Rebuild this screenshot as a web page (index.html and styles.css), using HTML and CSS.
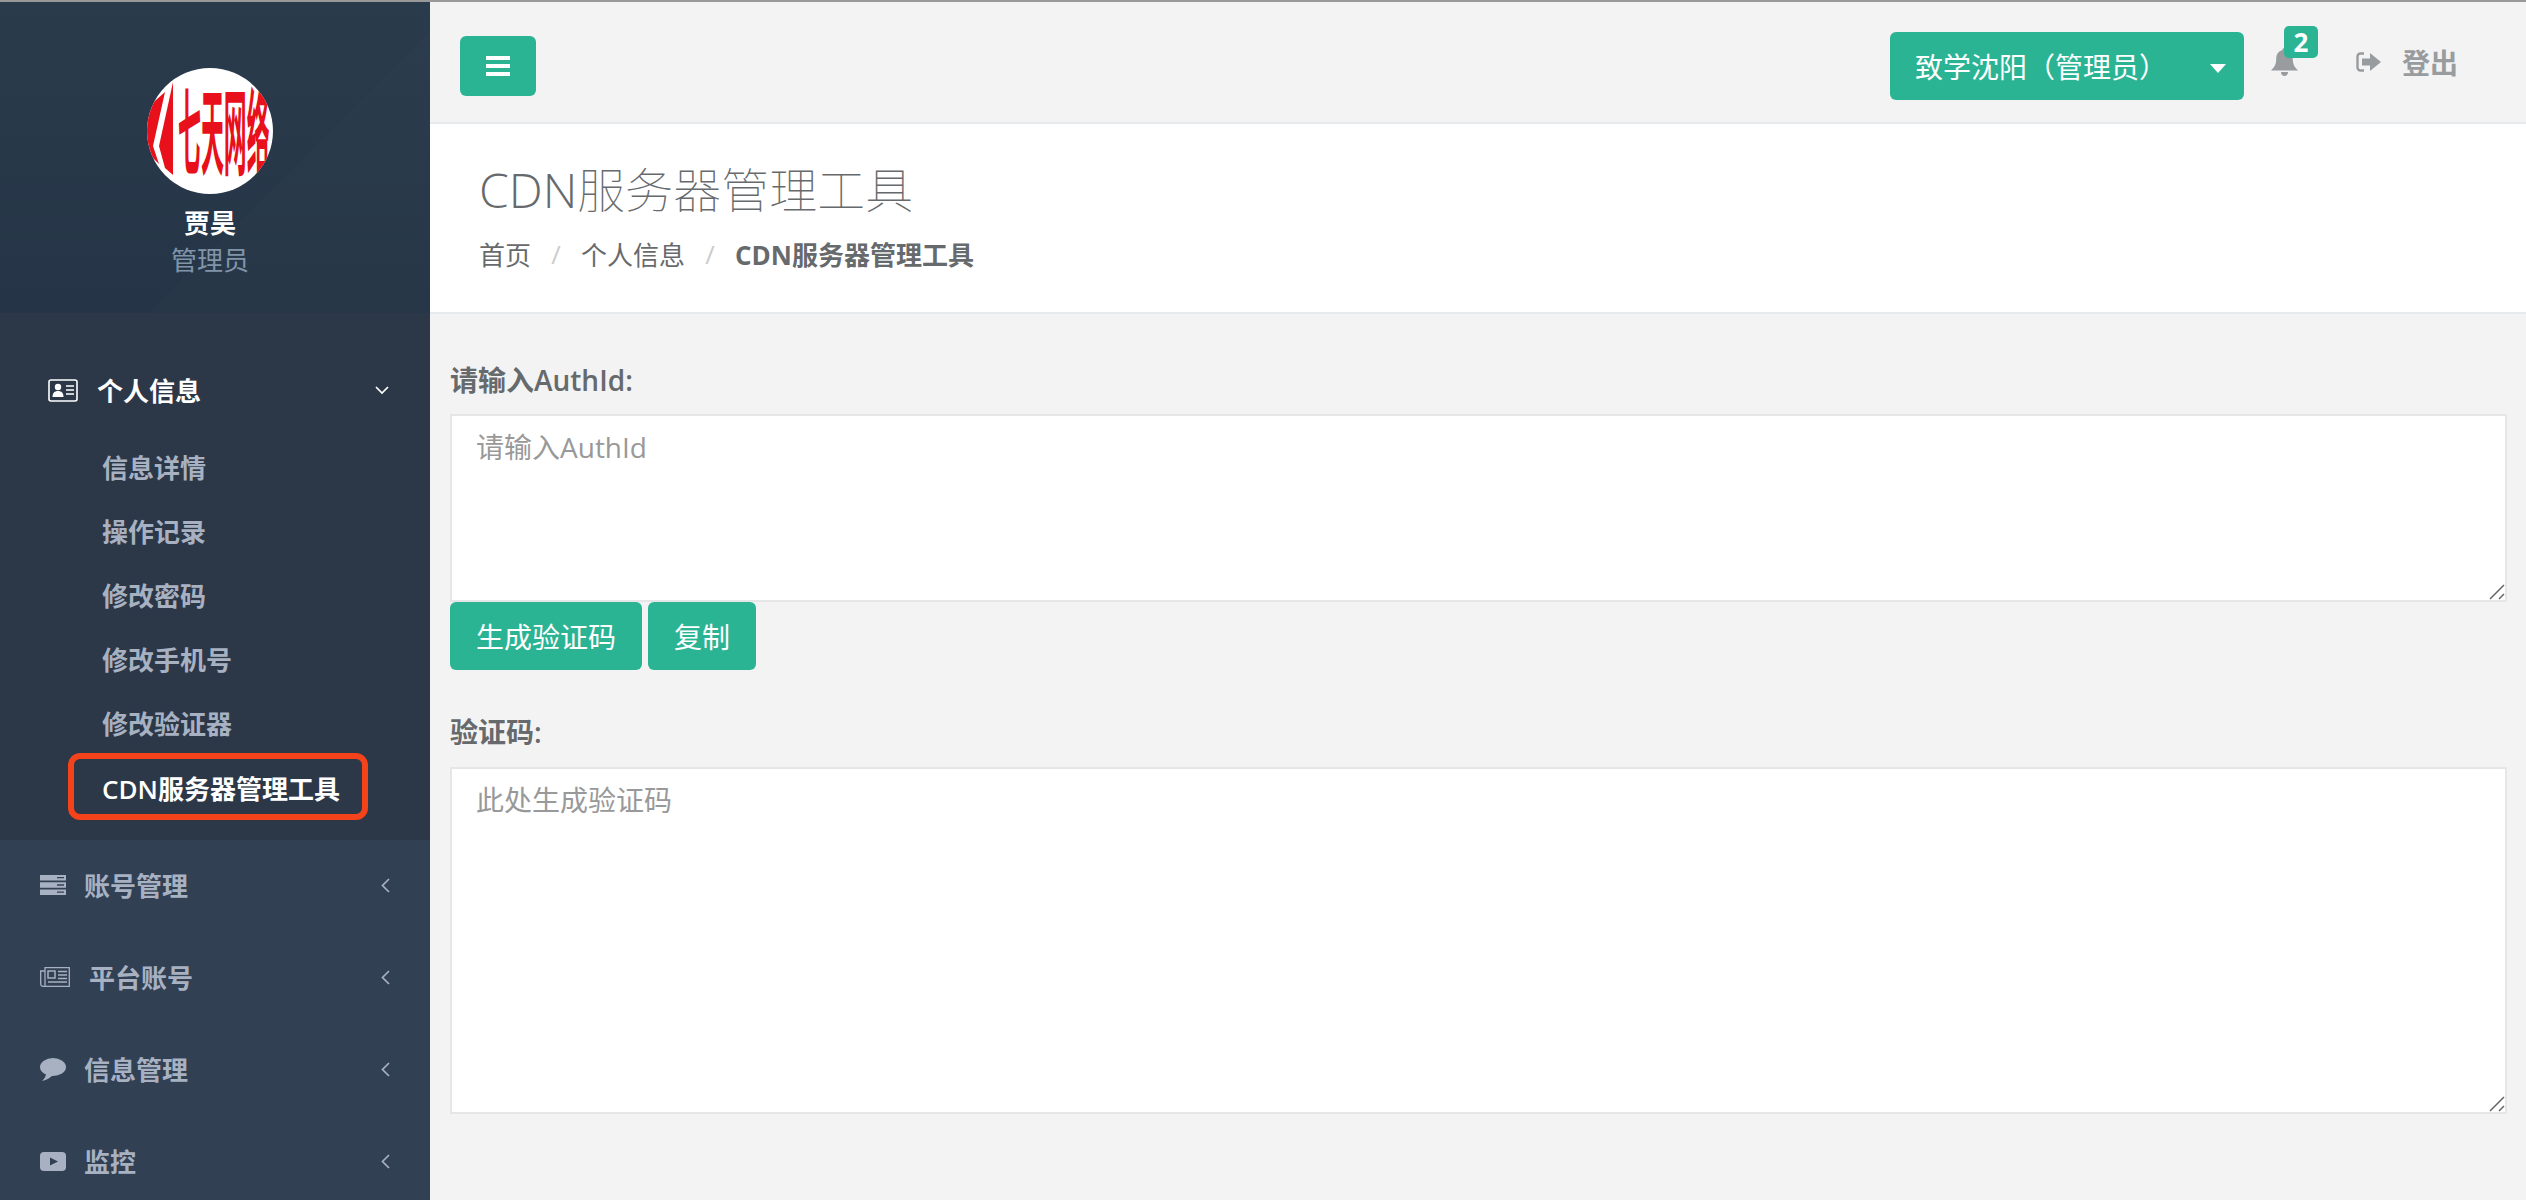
FILE: index.html
```html
<!DOCTYPE html>
<html lang="zh-CN">
<head>
<meta charset="utf-8">
<title>CDN服务器管理工具</title>
<link rel="stylesheet" href="styles.css">
</head>
<body>
<div class="wrapper">
	<div class="sidebar">
		<div class="profile">
			<svg class="avatar" viewBox="0 0 126 126">
				<rect width="126" height="126" fill="#fff"/>
				<polygon points="0,40 18,24 6,78 12,96 0,84" fill="#e8101a"/>
				<polygon points="26,14 26,107 18,100 12,78" fill="#e8101a"/>
				<text class="avatar_text" transform="translate(31 100) scale(.26 1.08)">七天网络</text>
			</svg>
			<div class="profile_name">贾昊</div>
			<div class="profile_role">管理员</div>
		</div>
		<div class="menu_open">
			<div class="menu_title">
				<svg class="icon_card" viewBox="0 0 30 23"><rect x="1" y="1" width="28" height="21" rx="2" fill="none" stroke="#fff" stroke-width="1.6"/><circle cx="10" cy="8" r="3.2" fill="#fff"/><path d="M4.5 18c0-4 2-6 5.500-6s5.500 2 5.500 6z" fill="#fff"/><path d="M18 7h8M18 11h8M18 15h8" stroke="#fff" stroke-width="1.4"/></svg>
				<span>个人信息</span>
				<svg class="chevron_down" viewBox="0 0 14 9"><path d="M1 1l6 6 6-6" fill="none" stroke="#fff" stroke-width="1.700"/></svg>
			</div>
			<ul class="submenu">
				<li>信息详情</li>
				<li>操作记录</li>
				<li>修改密码</li>
				<li>修改手机号</li>
				<li>修改验证器</li>
				<li class="current">CDN服务器管理工具</li>
			</ul>
		</div>
		<ul class="menu">
			<li>
				<svg class="icon_small" viewBox="0 0 26 20"><path d="M0 0h26v5.500H0zM0 7.200h26v5.500H0zM0 14.500h26V20H0z" fill="#a7b1c2"/><path d="M17 2.700h7M17 10h7M17 17.200h7" stroke="#324054" stroke-width="1.300"/></svg>
				<span>账号管理</span>
				<svg class="chevron_left" viewBox="0 0 9 15"><path d="M8 1L1.500 7.500 8 14" fill="none" stroke="#a7b1c2" stroke-width="1.700"/></svg>
			</li>
			<li>
				<svg class="icon_wide" viewBox="0 0 30 20"><path d="M5 .7h24.300v18.600H3a2.300 2.300 0 0 1-2.300-2.300V4H5zM5 4v15" fill="none" stroke="#a7b1c2" stroke-width="1.300"/><path d="M8 4h7v7H8z" fill="none" stroke="#a7b1c2" stroke-width="1.500"/><path d="M18 4.500h9M18 8h9M18 11.500h9M8 15h19" stroke="#a7b1c2" stroke-width="1.500"/></svg>
				<span>平台账号</span>
				<svg class="chevron_left" viewBox="0 0 9 15"><path d="M8 1L1.500 7.500 8 14" fill="none" stroke="#a7b1c2" stroke-width="1.700"/></svg>
			</li>
			<li>
				<svg class="icon_small" viewBox="0 0 26 23"><ellipse cx="13" cy="9" rx="13" ry="9" fill="#a7b1c2"/><path d="M6 15c0 3-1 5-4 8 5-1 8-3 11-6z" fill="#a7b1c2"/></svg>
				<span>信息管理</span>
				<svg class="chevron_left" viewBox="0 0 9 15"><path d="M8 1L1.500 7.500 8 14" fill="none" stroke="#a7b1c2" stroke-width="1.700"/></svg>
			</li>
			<li>
				<svg class="icon_small" viewBox="0 0 26 19"><rect width="26" height="19" rx="4" fill="#a7b1c2"/><path d="M10 5.500l8 4-8 4z" fill="#324054"/></svg>
				<span>监控</span>
				<svg class="chevron_left" viewBox="0 0 9 15"><path d="M8 1L1.500 7.500 8 14" fill="none" stroke="#a7b1c2" stroke-width="1.700"/></svg>
			</li>
		</ul>
	</div>

	<div class="main">
		<div class="navbar">
			<button class="btn btn_menu" type="button">
				<svg viewBox="0 0 24 20" width="24" height="20"><path d="M0 0h24v4H0zM0 8h24v4H0zM0 16h24v4H0z" fill="#fff"/></svg>
			</button>
			<div class="navbar_right">
				<button class="btn btn_org" type="button"><span>致学沈阳（管理员）</span><i class="caret"></i></button>
				<div class="bell">
					<svg viewBox="0 0 27 28" width="27" height="28"><path d="M13.500 0c1.500 0 2.300 1 2.300 2.300 4 1 6 4 6 8.700 0 6 2 8 5.200 11.500H0C3.200 19 5.200 17 5.200 11c0-4.700 2-7.700 6-8.700C11.200 1 12 0 13.500 0zM10 24h7c0 2.500-1.500 4-3.500 4S10 26.500 10 24z" fill="#999c9e"/></svg>
					<span class="badge">2</span>
				</div>
				<div class="logout">
					<svg viewBox="0 0 25 20" width="25" height="20"><path d="M8 1.500H4.500A3 3 0 0 0 1.500 4.500v11a3 3 0 0 0 3 3H8" fill="none" stroke="#999c9e" stroke-width="2.400"/><path d="M6 6.500h8V1l11 9-11 9v-5.500H6z" fill="#999c9e"/></svg>
					<span>登出</span>
				</div>
			</div>
		</div>

		<div class="page_heading">
			<h1>CDN服务器管理工具</h1>
			<div class="breadcrumb">
				<span>首页</span><i>/</i><span>个人信息</span><i>/</i><b>CDN服务器管理工具</b>
			</div>
		</div>

		<div class="content">
			<label class="field_label" for="auth_id">请输入AuthId:</label>
			<div class="field_wrap">
				<textarea class="field field_auth" id="auth_id" placeholder="请输入AuthId"></textarea>
				<svg class="grip" viewBox="0 0 16 16"><path d="M1 15L15 1M10 15l5-5" fill="none" stroke="#666" stroke-width="1.500"/></svg>
			</div>
			<div class="actions">
				<button class="btn btn_action" type="button">生成验证码</button>
				<button class="btn btn_action" type="button">复制</button>
			</div>
			<label class="field_label second" for="code">验证码:</label>
			<div class="field_wrap">
				<textarea class="field field_code" id="code" placeholder="此处生成验证码"></textarea>
				<svg class="grip" viewBox="0 0 16 16"><path d="M1 15L15 1M10 15l5-5" fill="none" stroke="#666" stroke-width="1.500"/></svg>
			</div>
		</div>
	</div>
</div>
</body>
</html>
```

FILE: styles.css
```css
* {
	box-sizing: border-box;
}
html, body {
	margin: 0;
	height: 100%;
}
body {
	font-family: "Open Sans", "Noto Sans CJK SC", sans-serif;
	font-size: 28px;
	color: #676a6c;
	background: #f3f3f4;
	overflow: hidden;
}
ul {
	list-style: none;
	margin: 0;
	padding: 0;
}
.wrapper {
	display: flex;
	height: 1200px;
	border-top: 2px solid #999;
}

/* sidebar */
.sidebar {
	width: 430px;
	flex: none;
	overflow: hidden;
	background: #324054;
	font-size: 26px;
	font-weight: 600;
	color: #a7b1c2;
}
.profile {
	height: 311px;
	padding: 66px 10px 0 0;
	text-align: center;
	background:
		linear-gradient(135deg, transparent 62%, rgba(255,255,255,.008) 62%),
		linear-gradient(180deg, #2a3b4c, #253547);
}
.avatar {
	display: block;
	width: 126px;
	height: 126px;
	margin: 0 auto 11px;
	border-radius: 50%;
}
.avatar_text {
	font-family: "Noto Sans CJK SC", sans-serif;
	font-size: 88px;
	font-weight: 700;
	fill: #e8101a;
}
.profile_name {
	line-height: 36px;
	font-weight: 700;
	color: #fff;
}
.profile_role {
	line-height: 36px;
	margin-top: 1px;
	font-weight: 400;
	color: #8095a8;
}
.menu_open {
	height: 527px;
	padding-top: 45px;
	background: #2c3848;
}
.menu_title {
	display: flex;
	align-items: center;
	height: 64px;
	padding-left: 48px;
	color: #fff;
}
.menu_title span {
	margin-left: 19px;
}
.icon_card {
	width: 30px;
	height: 23px;
}
.chevron_down {
	width: 14px;
	height: 9px;
	margin-left: auto;
	margin-right: 41px;
}
.submenu {
	margin-top: 14px;
}
.submenu li {
	height: 64px;
	line-height: 64px;
	padding-left: 102px;
}
.submenu li.current {
	width: 300px;
	height: 67px;
	margin: -3px 0 0 68px;
	padding: 3px 0 0 28px;
	line-height: 55px;
	white-space: nowrap;
	color: #fff;
	border: 6px solid #f4431a;
	border-radius: 12px;
}
.menu {
	margin-top: -1px;
}
.menu li {
	display: flex;
	align-items: center;
	height: 92px;
	padding-left: 40px;
}
.icon_small {
	width: 26px;
	margin-right: 18px;
	flex: none;
}
.icon_wide {
	width: 30px;
	margin-right: 19px;
	flex: none;
}
.chevron_left {
	width: 9px;
	height: 15px;
	margin-left: auto;
	margin-right: 40px;
}

/* top bar */
.main {
	flex: 1;
	min-width: 0;
}
.btn {
	border: 0;
	border-radius: 6px;
	padding: 0;
	font-family: inherit;
	font-size: 28px;
	color: #fff;
	background: #2bb494;
}
.navbar {
	display: flex;
	align-items: center;
	justify-content: space-between;
	height: 122px;
	padding: 0 68px 0 30px;
	border-bottom: 2px solid #e7eaec;
}
.btn_menu {
	display: flex;
	align-items: center;
	justify-content: center;
	width: 76px;
	height: 60px;
	margin-top: 8px;
}
.navbar_right {
	display: flex;
	align-items: center;
}
.btn_org {
	display: flex;
	align-items: center;
	width: 354px;
	height: 68px;
	margin-top: 8px;
	padding-left: 25px;
}
.caret {
	width: 0;
	height: 0;
	margin-left: auto;
	margin-right: 18px;
	margin-top: 4px;
	border-top: 9px solid #fff;
	border-left: 8px solid transparent;
	border-right: 8px solid transparent;
}
.bell {
	position: relative;
	height: 28px;
	margin-left: 27px;
	margin-right: 58px;
	line-height: 0;
}
.badge {
	position: absolute;
	left: 13px;
	top: -22px;
	width: 34px;
	height: 32px;
	line-height: 32px;
	text-align: center;
	font-size: 26px;
	font-weight: 700;
	color: #fff;
	background: #2bb494;
	border-radius: 5px;
}
.logout {
	display: flex;
	align-items: center;
	gap: 21px;
	font-size: 28px;
	font-weight: 600;
	color: #999c9e;
}

/* page heading */
.page_heading {
	height: 190px;
	padding: 36px 0 0 49px;
	background: #fff;
	border-bottom: 2px solid #e7eaec;
}
.page_heading h1 {
	margin: 0 0 14px;
	font-size: 48px;
	font-weight: 100;
	line-height: 60px;
}
.breadcrumb {
	display: flex;
	align-items: center;
	height: 40px;
	font-size: 26px;
}
.breadcrumb i {
	width: 50px;
	text-align: center;
	font-style: normal;
	color: #ccc;
}
.breadcrumb b {
	font-weight: 700;
}

/* form */
.content {
	padding: 46px 19px 0 20px;
}
.field_label {
	display: block;
	height: 40px;
	line-height: 40px;
	margin-bottom: 14px;
	font-weight: 600;
}
.field_label.second {
	margin-top: 42px;
	margin-bottom: 15px;
}
.field_wrap {
	position: relative;
}
.field {
	display: block;
	width: 100%;
	margin: 0;
	padding: 11px 24px;
	resize: none;
	font-family: inherit;
	font-size: 28px;
	line-height: 40px;
	color: #676a6c;
	background: #fff;
	border: 2px solid #e5e6e7;
	outline: 0;
}
.field::placeholder {
	color: #999;
	opacity: 1;
}
.field_auth {
	height: 188px;
}
.field_code {
	height: 347px;
}
.grip {
	position: absolute;
	right: 2px;
	bottom: 2px;
	width: 16px;
	height: 16px;
}
.actions {
	display: flex;
	gap: 6px;
}
.btn_action {
	height: 68px;
	padding: 0 26px;
}
```
